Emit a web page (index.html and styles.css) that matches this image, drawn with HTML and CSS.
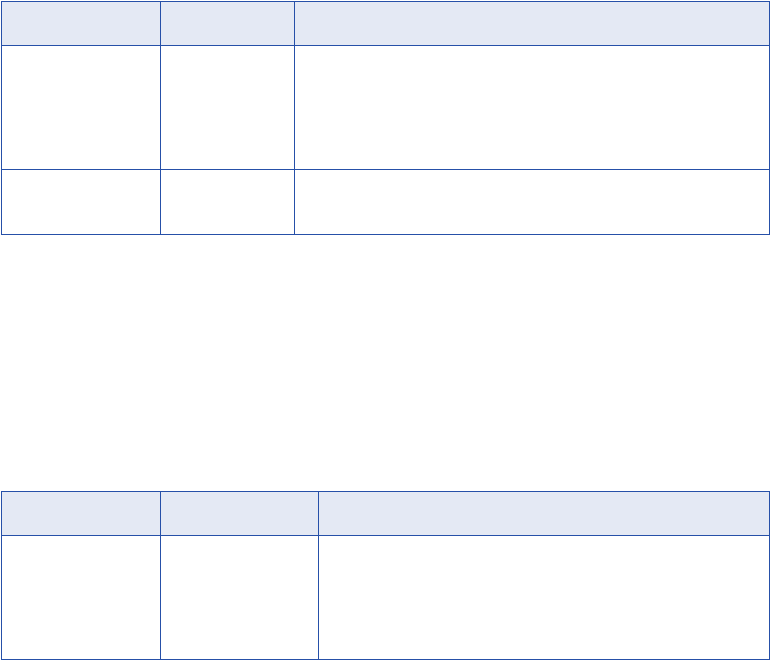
FILE: index.html
```html
<!DOCTYPE html>
<html lang="en">
<head>
<meta charset="utf-8">
<title>Tables</title>
<link rel="stylesheet" href="styles.css">
</head>
<body>
<div class="page">
  <div class="grid grid-a">
    <div class="cell head"></div>
    <div class="cell head"></div>
    <div class="cell head"></div>
    <div class="cell tall"></div>
    <div class="cell tall"></div>
    <div class="cell tall"></div>
    <div class="cell short"></div>
    <div class="cell short"></div>
    <div class="cell short"></div>
  </div>
  <div class="grid grid-b">
    <div class="cell head"></div>
    <div class="cell head"></div>
    <div class="cell head"></div>
    <div class="cell tall"></div>
    <div class="cell tall"></div>
    <div class="cell tall"></div>
  </div>
</div>
</body>
</html>
```
FILE: styles.css
```css
html, body {
  margin: 0;
  padding: 0;
  background: #ffffff;
  font-family: "Liberation Sans", Arial, sans-serif;
}
.page {
  padding: 1px 0 0 1px;
  display: flex;
  flex-direction: column;
  gap: 256px;
  width: 769px;
}
.grid {
  display: grid;
  border-left: 1px solid #2650a8;
  border-top: 1px solid #2650a8;
}
.grid-a {
  grid-template-columns: 159px 134px 475px;
}
.grid-b {
  grid-template-columns: 159px 158px 451px;
}
.cell {
  box-sizing: border-box;
  border-right: 1px solid #2650a8;
  border-bottom: 1px solid #2650a8;
}
.head {
  height: 44px;
  background: #e4e9f4;
}
.tall {
  height: 124px;
}
.short {
  height: 65px;
}
```
